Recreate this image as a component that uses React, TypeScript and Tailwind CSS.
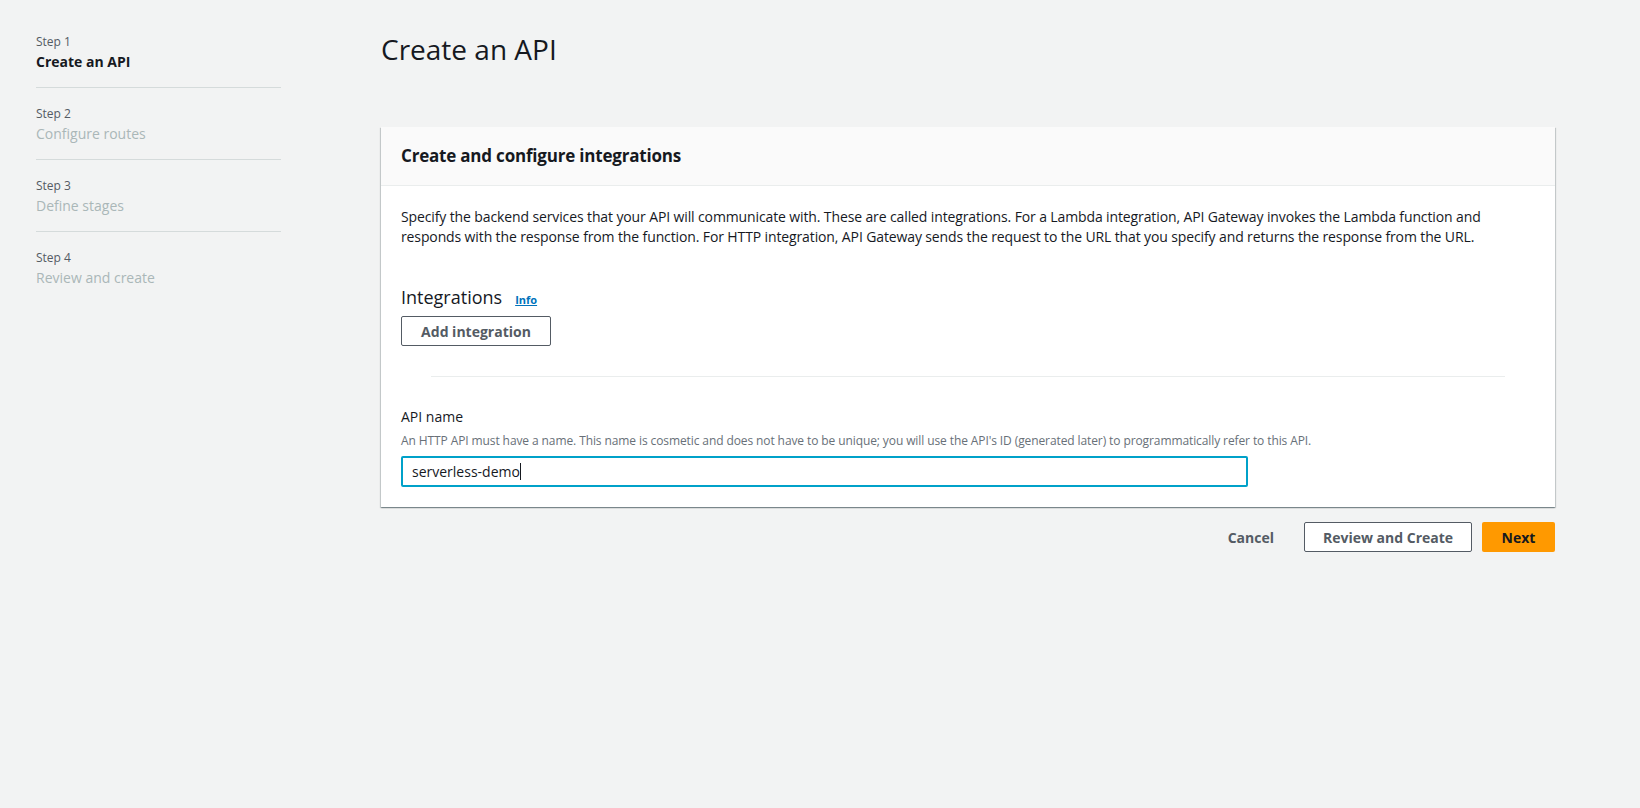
import React from 'react';

const steps = [
  { step: 'Step 1', label: 'Create an API', active: true },
  { step: 'Step 2', label: 'Configure routes', active: false },
  { step: 'Step 3', label: 'Define stages', active: false },
  { step: 'Step 4', label: 'Review and create', active: false },
];

const font = { fontFamily: '"Open Sans", "Noto Sans", Arial, sans-serif' };

const App: React.FC = () => {
  return (
    <div className="min-h-screen w-full bg-[#f2f3f3] text-[#16191f] flex" style={font}>
      {/* wizard steps */}
      <nav className="w-[245px] ml-[36px] pt-[33px] shrink-0">
        {steps.map((s, i) => (
          <div
            key={s.step}
            className={`pb-[15px] ${i < steps.length - 1 ? 'border-b border-[#d5dbdb] mb-[17px]' : ''}`}
          >
            <div className="text-[12px] leading-[18px] text-[#545b64]">{s.step}</div>
            <div
              className={`text-[14px] leading-[20px] mt-[1px] ${
                s.active ? 'font-bold text-[#16191f]' : 'text-[#aab7b8]'
              }`}
            >
              {s.label}
            </div>
          </div>
        ))}
      </nav>

      {/* main */}
      <main className="ml-[100px] w-[1174px] pt-[31px]">
        <h1 className="text-[28px] leading-[36px] font-normal text-[#16191f]">Create an API</h1>

        <section className="mt-[60px] bg-white shadow-[0_1px_1px_0_rgba(0,28,36,0.3),1px_1px_1px_0_rgba(0,28,36,0.15),-1px_1px_1px_0_rgba(0,28,36,0.15)]">
          <div className="h-[59px] px-[20px] flex items-center bg-[#fafafa] border-b border-[#eaeded]">
            <h2 className="text-[17px] leading-[22px] font-bold tracking-[-0.2px]">Create and configure integrations</h2>
          </div>

          <div className="px-[20px] pt-[21px] pb-[20px]">
            <p className="text-[14px] leading-[20px] tracking-[-0.12px]">
              Specify the backend services that your API will communicate with. These are called integrations. For a
              Lambda integration, API Gateway invokes the Lambda function and responds with the response from the
              function. For HTTP integration, API Gateway sends the request to the URL that you specify and returns the
              response from the URL.
            </p>

            <div className="mt-[38px] flex items-baseline gap-[13px]">
              <h3 className="text-[18px] leading-[24px] font-normal">Integrations</h3>
              <a href="#" className="text-[11px] font-bold text-[#0073bb] underline">
                Info
              </a>
            </div>
            <button className="mt-[7px] h-[30px] w-[150px] border border-[#545b64] rounded-[2px] bg-white text-[14px] font-bold text-[#545b64]">
              Add integration
            </button>

            <div className="mt-[30px] mx-[30px] border-t border-[#eaeded]" />

            <label className="block mt-[30px] text-[14px] leading-[20px]">API name</label>
            <div className="mt-[6px] text-[12px] leading-[16px] text-[#687078] tracking-[-0.1px]">
              An HTTP API must have a name. This name is cosmetic and does not have to be unique; you will use the API's ID
              (generated later) to programmatically refer to this API.
            </div>
            <div className="mt-[7px] w-[847px] h-[31px] border-2 border-[#00a1c9] rounded-[2px] flex items-center px-[9px] text-[14px]">
              <span>serverless-demo</span>
              <span className="w-px h-[17px] bg-[#16191f]" />
            </div>
          </div>
        </section>

        <div className="mt-[15px] flex justify-end items-center gap-[10px]">
          <button className="h-[30px] px-[20px] text-[14px] font-bold text-[#545b64]">Cancel</button>
          <button className="h-[30px] w-[168px] border border-[#545b64] rounded-[2px] bg-white text-[14px] font-bold text-[#545b64]">
            Review and Create
          </button>
          <button className="h-[30px] w-[73px] rounded-[2px] bg-[#ff9900] text-[14px] font-bold text-[#16191f]">
            Next
          </button>
        </div>
      </main>
    </div>
  );
};

export default App;
